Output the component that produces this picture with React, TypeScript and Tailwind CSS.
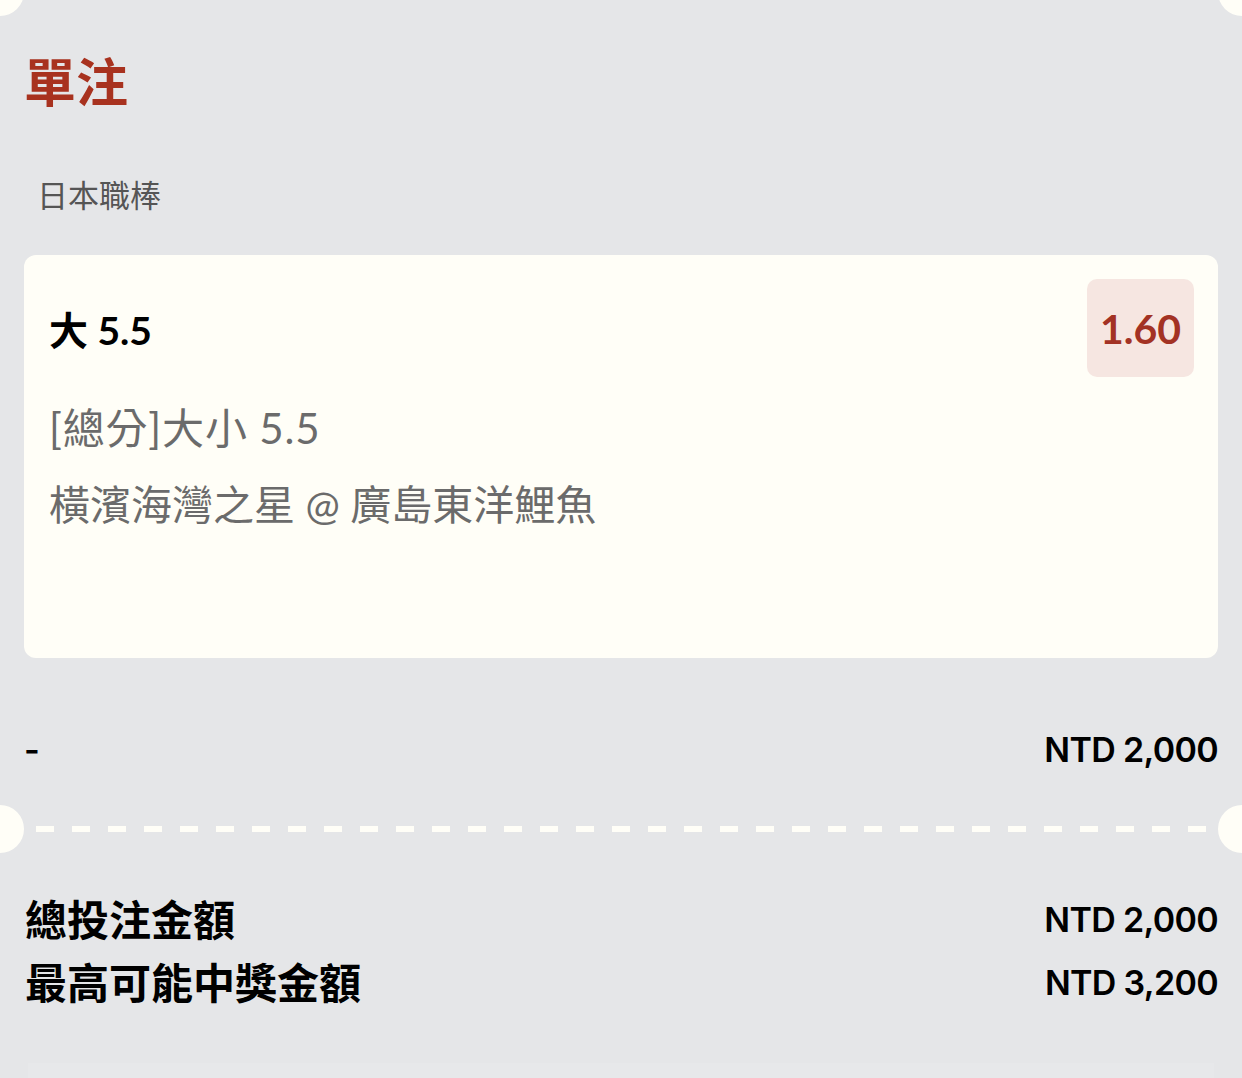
import React from 'react';

const bet = {
  league: '日本職棒',
  pick: '大 5.5',
  market: '[總分]大小 5.5',
  match: '橫濱海灣之星 @ 廣島東洋鯉魚',
  odds: '1.60',
  stake: 'NTD 2,000',
};

function Notch({ side }: { side: 'left' | 'right' }) {
  return (
    <div
      className={`absolute top-0 h-[48px] w-[48px] rounded-full bg-[#fffef7] ${side === 'left' ? '-left-[24px]' : '-right-[24px]'}`}
    />
  );
}

function SummaryRow({ label, value }: { label: string; value: string }) {
  return (
    <div className="flex items-center justify-between">
      <span className="text-[42px] font-bold leading-[56px] text-black">{label}</span>
      <span className="font-['Inter',sans-serif] text-[34px] font-semibold leading-[56px] tracking-[-0.02em] text-black">
        {value}
      </span>
    </div>
  );
}

export default function App() {
  return (
    <div className="relative min-h-[1078px] w-full overflow-hidden bg-[#e5e6e8] font-['Lato','Noto_Sans_CJK_TC',sans-serif]">
      {/* top corner notches */}
      <div className="absolute -left-[24px] -top-[32px] h-[48px] w-[48px] rounded-full bg-[#fffef7]" />
      <div className="absolute -right-[24px] -top-[32px] h-[48px] w-[48px] rounded-full bg-[#fffef7]" />

      <div className="px-[24px]">
        <h1 className="pt-[50px] text-[52px] font-bold leading-[64px] text-[#a8321f]">單注</h1>
        <p className="mt-[61px] pl-[13px] text-[31px] leading-[40px] text-[#555555]">{bet.league}</p>

        {/* selection card */}
        <div className="mt-[40px] flex h-[403px] items-start justify-between rounded-[12px] bg-[#fffef7] pb-[24px] pl-[25px] pr-[24px] pt-[24px]">
          <div className="flex flex-col">
            <div className="pt-[27px] text-[39px] font-bold leading-[48px] text-black">{bet.pick}</div>
            <div className="mt-[48px] text-[42px] leading-[52px] tracking-[0.02em] text-[#6b6b6b]">{bet.market}</div>
            <div className="mt-[25px] text-[41px] leading-[52px] text-[#6b6b6b]">{bet.match}</div>
          </div>
          <div className="flex h-[98px] w-[107px] items-center justify-center rounded-[10px] bg-[#f6e6e1]">
            <span className="text-[41px] font-bold leading-none text-[#a33224]">{bet.odds}</span>
          </div>
        </div>

        {/* stake row */}
        <div className="mt-[70px] flex items-center justify-between font-['Inter',sans-serif] text-[34px] font-semibold leading-[44px] tracking-[-0.02em] text-black">
          <span>-</span>
          <span>{bet.stake}</span>
        </div>
      </div>

      {/* divider with side notches */}
      <div className="relative mt-[33px] flex h-[48px] items-center px-[36px]">
        <Notch side="left" />
        <div className="h-[6px] flex-1 bg-[repeating-linear-gradient(90deg,#fffef7_0_18px,transparent_18px_36px)]" />
        <Notch side="right" />
      </div>

      <div className="mt-[39px] flex flex-col gap-[7px] pl-[25px] pr-[24px]">
        <SummaryRow label="總投注金額" value="NTD 2,000" />
        <SummaryRow label="最高可能中獎金額" value="NTD 3,200" />
      </div>

      <div className="mx-[28px] mt-[52px] h-[16px] bg-[#e7e8ea]" />
    </div>
  );
}
